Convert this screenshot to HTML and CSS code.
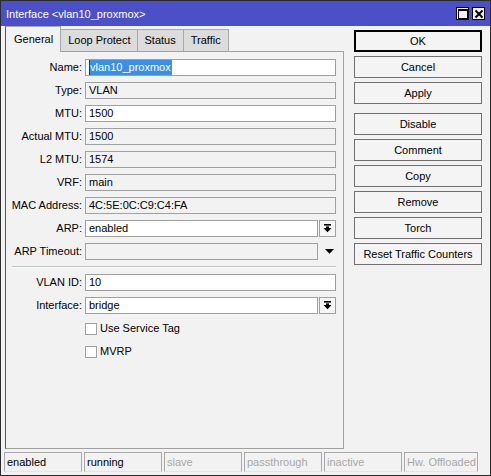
FILE: index.html
```html
<!DOCTYPE html>
<html>
<head>
<meta charset="utf-8">
<link rel="stylesheet" href="styles.css">
</head>
<body>
<div class="window">
  <div class="titlebar">
    <span class="title">Interface &lt;vlan10_proxmox&gt;</span>
    <div class="wbtns">
      <span class="wbtn"><svg width="10" height="10" viewBox="0 0 10 10"><rect x="0.5" y="0.5" width="9" height="9" fill="none" stroke="#000" stroke-width="1"/><rect x="0" y="0" width="10" height="2" fill="#000"/></svg></span>
      <span class="wbtn"><svg width="10" height="10" viewBox="0 0 10 10"><path d="M1.5 1.5 L8.5 8.5 M8.5 1.5 L1.5 8.5" stroke="#000" stroke-width="2"/></svg></span>
    </div>
  </div>
  <div class="main">
    <div class="left">
      <div class="tabs">
        <div class="tab active">General</div>
        <div class="tab">Loop Protect</div>
        <div class="tab">Status</div>
        <div class="tab">Traffic</div>
      </div>
      <div class="panel">
        <div class="form">
          <label>Name:</label>
          <div class="field edit"><span class="sel">vlan10_proxmox</span></div>
          <label>Type:</label>
          <div class="field">VLAN</div>
          <label>MTU:</label>
          <div class="field edit">1500</div>
          <label>Actual MTU:</label>
          <div class="field">1500</div>
          <label>L2 MTU:</label>
          <div class="field">1574</div>
          <label>VRF:</label>
          <div class="field">main</div>
          <label>MAC Address:</label>
          <div class="field">4C:5E:0C:C9:C4:FA</div>
          <label>ARP:</label>
          <div class="combo">
            <div class="field edit">enabled</div>
            <span class="dropbtn"><svg width="9" height="9" viewBox="0 0 9 9"><rect x="1" y="0" width="7" height="1.6" fill="#000"/><rect x="3" y="2.4" width="3" height="2" fill="#000"/><polygon points="0.5,4 8.5,4 4.5,8.2" fill="#000"/></svg></span>
          </div>
          <label>ARP Timeout:</label>
          <div class="combo">
            <div class="field"></div>
            <span class="droparrow"><svg width="9" height="5" viewBox="0 0 9 5"><polygon points="0,0 9,0 4.5,4.8" fill="#000"/></svg></span>
          </div>
          <div class="sep"></div>
          <label>VLAN ID:</label>
          <div class="field edit">10</div>
          <label>Interface:</label>
          <div class="combo">
            <div class="field edit">bridge</div>
            <span class="dropbtn"><svg width="9" height="9" viewBox="0 0 9 9"><rect x="1" y="0" width="7" height="1.6" fill="#000"/><rect x="3" y="2.4" width="3" height="2" fill="#000"/><polygon points="0.5,4 8.5,4 4.5,8.2" fill="#000"/></svg></span>
          </div>
          <span class="empty"></span>
          <div class="check"><span class="box"></span>Use Service Tag</div>
          <span class="empty"></span>
          <div class="check"><span class="box"></span>MVRP</div>
        </div>
      </div>
    </div>
    <div class="buttons">
      <div class="btn default">OK</div>
      <div class="btn">Cancel</div>
      <div class="btn">Apply</div>
      <div class="btn spaced">Disable</div>
      <div class="btn">Comment</div>
      <div class="btn">Copy</div>
      <div class="btn">Remove</div>
      <div class="btn">Torch</div>
      <div class="btn">Reset Traffic Counters</div>
    </div>
  </div>
  <div class="status">
    <div class="cell">enabled</div>
    <div class="cell">running</div>
    <div class="cell off">slave</div>
    <div class="cell off">passthrough</div>
    <div class="cell off">inactive</div>
    <div class="cell off last">Hw. Offloaded</div>
  </div>
</div>
</body>
</html>
```
FILE: styles.css
```css
* { box-sizing: border-box; }
html, body { margin: 0; padding: 0; background: #f2f2f2; }
body {
  font-family: "Liberation Sans", Arial, sans-serif;
  font-size: 11px;
  color: #000;
}
.window {
  width: 491px;
  height: 476px;
  border: 1px solid #2b2b2b;
  background: #f2f2f2;
  display: flex;
  flex-direction: column;
}
.titlebar {
  height: 25px;
  background: #4b50c8;
  display: flex;
  align-items: center;
  justify-content: space-between;
  padding: 0 5px 0 5px;
  flex: none;
}
.title { color: #fff; font-size: 11px; }
.wbtns { display: flex; gap: 3px; }
.wbtn {
  width: 13px;
  height: 13px;
  background: #f0f0f0;
  border: 1px solid #000;
  display: flex;
  align-items: center;
  justify-content: center;
}
.main {
  display: flex;
  flex: 1;
  min-height: 0;
}
.left {
  width: 339px;
  margin-left: 4px;
  display: flex;
  flex-direction: column;
}
.tabs {
  height: 25px;
  display: flex;
  align-items: flex-end;
  flex: none;
}
.tab {
  height: 22px;
  line-height: 21px;
  padding: 0 7px;
  background: #dcdcdc;
  border-top: 1px solid #a8a8a8;
  border-right: 1px solid #a8a8a8;
}
.tab:nth-child(2) { padding: 0 6px 0 7px; }
.tab.active {
  height: 26px;
  line-height: 24px;
  margin-bottom: -1px;
  background: #f2f2f2;
  border-left: 1px solid #555;
  border-top: 1px solid #a8a8a8;
  border-right: 1px solid #a8a8a8;
  border-bottom: none;
  position: relative;
  z-index: 1;
  padding: 0 7px 0 8px;
}
.panel {
  flex: 1;
  border: 1px solid #a0a0a0;
  border-left-color: #555;
  padding: 7px 6px 0 0;
}
.form {
  display: grid;
  grid-template-columns: 76px 251px;
  column-gap: 3px;
  row-gap: 6px;
  grid-auto-rows: auto;
}
.form label {
  text-align: right;
  height: 17px;
  line-height: 17px;
  white-space: nowrap;
}
.empty { height: 17px; }
.field {
  height: 17px;
  border: 1px solid #a0a0a0;
  background: #f2f2f2;
  line-height: 15px;
  padding-left: 3px;
  white-space: nowrap;
  overflow: hidden;
}
.field.edit { background: #fff; }
.sel {
  display: inline-block;
  height: 15px;
  line-height: 15px;
  background: #3a8fe6;
  color: #fff;
  border-left: 1px solid #333;
  padding-right: 1px;
}
.combo {
  display: flex;
  gap: 1px;
  height: 17px;
}
.combo .field { flex: 1; }
.dropbtn, .droparrow {
  width: 17px;
  height: 17px;
  flex: none;
  display: flex;
  align-items: center;
  justify-content: center;
}
.dropbtn {
  border: 1px solid #a0a0a0;
  background: #f6f6f6;
}
.droparrow { padding-left: 3px; }
.sep {
  grid-column: 1 / 3;
  height: 2px;
  margin-left: 6px;
  border-top: 1px solid #c4c4c4;
  border-bottom: 1px solid #fafafa;
}
.check {
  display: flex;
  align-items: center;
  gap: 3px;
  height: 17px;
  line-height: 17px;
}
.box {
  width: 12px;
  height: 12px;
  border: 1px solid #a0a0a0;
  background: #fff;
}
.buttons {
  margin-left: 10px;
  padding-top: 4px;
  width: 128px;
  display: flex;
  flex-direction: column;
  gap: 4px;
}
.btn {
  height: 22px;
  border: 1px solid #707070;
  background: #f4f4f4;
  text-align: center;
  line-height: 20px;
}
.btn.default {
  border-color: #000;
  box-shadow: inset 0 0 0 1px #000;
}
.btn.spaced { margin-top: 5px; }
.status {
  flex: none;
  height: 20px;
  margin: 3px 0 3px 3px;
  display: flex;
  gap: 2px;
}
.cell {
  width: 78px;
  height: 20px;
  border: 1px solid #a8a8a8;
  border-bottom-color: #e4e4e4;
  line-height: 18px;
  padding-left: 2px;
  white-space: nowrap;
}
.cell.off { color: #a8a8a8; }
.cell.last { width: 74px; }
```
